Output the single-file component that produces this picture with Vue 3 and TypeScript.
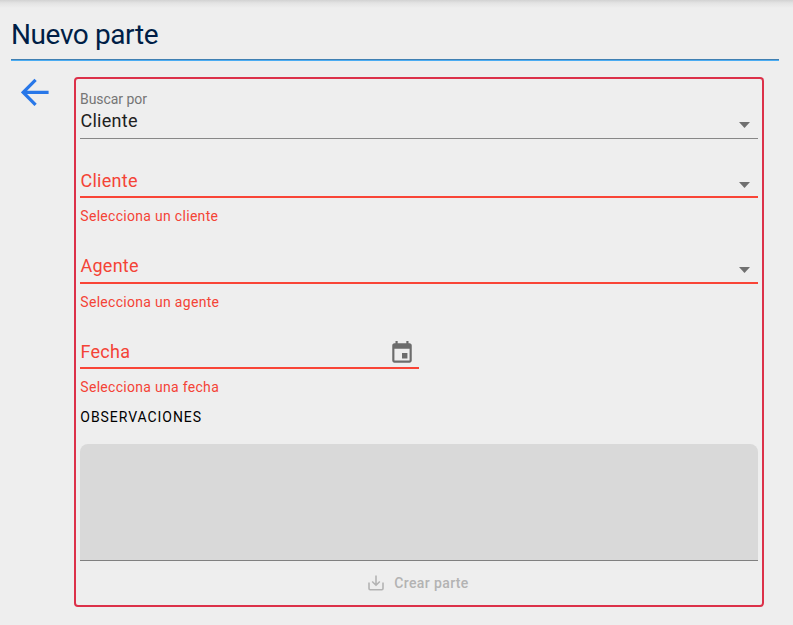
<script setup lang="ts">
import { ref } from 'vue'

interface SelectField {
  id: string
  label: string
  error: string
}

const selects: SelectField[] = [
  { id: 'cliente', label: 'Cliente', error: 'Selecciona un cliente' },
  { id: 'agente', label: 'Agente', error: 'Selecciona un agente' },
]
const searchBy = ref('Cliente')
const notes = ref('')
</script>

<template>
  <main class="page">
    <h1 class="title">Nuevo parte</h1>
    <div class="content">
      <button class="back" type="button" aria-label="Volver">
        <svg width="28" height="28" viewBox="0 0 28 28">
          <path d="M27.6 14.4H3M14.6 1.9L2.2 14.4L14.6 26.9" fill="none" stroke="#2877e8" stroke-width="3.2" />
        </svg>
      </button>
      <form class="card" @submit.prevent>
        <div class="field filled">
          <div>
            <div class="caption">Buscar por</div>
            <div class="value">{{ searchBy }}</div>
          </div>
          <svg class="arrow" width="12" height="6" viewBox="0 0 12 6"><path d="M0 0H11L5.5 6Z" /></svg>
        </div>
        <template v-for="field in selects" :key="field.id">
          <div class="field invalid" :class="field.id">
            <span class="label">{{ field.label }}</span>
            <svg class="arrow" width="12" height="6" viewBox="0 0 12 6"><path d="M0 0H11L5.5 6Z" /></svg>
          </div>
          <div class="error">{{ field.error }}</div>
        </template>
        <div class="field invalid date">
          <span class="label">Fecha</span>
          <svg class="calendar" width="26" height="26" viewBox="0 0 24 24">
            <path d="M17 12h-5v5h5v-5zM16 1v2H8V1H6v2H5c-1.11 0-1.99.9-1.99 2L3 19c0 1.1.89 2 2 2h14c1.1 0 2-.9 2-2V5c0-1.1-.9-2-2-2h-1V1h-2zm3 18H5V8h14v11z" />
          </svg>
        </div>
        <div class="error">Selecciona una fecha</div>
        <label class="notes-label" for="notes">OBSERVACIONES</label>
        <textarea id="notes" v-model="notes" class="notes"></textarea>
        <button class="submit" type="submit" disabled>
          <svg width="16" height="16" viewBox="0 0 16 16">
            <path d="M1 7.5V13.5Q1 14.7 2.2 14.7H13.8Q15 14.7 15 13.5V7.5M8 0.5V9.5M4.2 6.5L8 10.2L11.8 6.5" fill="none" stroke="currentColor" stroke-width="1.6" />
          </svg>
          <span>Crear parte</span>
        </button>
      </form>
    </div>
  </main>
</template>

<style>
body {
  background: #eee;
}
</style>

<style scoped>
.page {
  box-sizing: border-box;
  height: 625px;
  padding: 10px 14px 0 11px;
  overflow: hidden;
  background: linear-gradient(#d2d2d2, #e3e3e3 3px, #eee 8px);
  font-family: Roboto, sans-serif;
}
.title {
  box-sizing: border-box;
  height: 50px;
  margin: 0;
  border-bottom: 1px solid #3f7fb2;
  box-shadow: 0 1px #4bacf2;
  color: #001e46;
  font-size: 28px;
  font-weight: 400;
  line-height: 49px;
  letter-spacing: -0.4px;
}
.content {
  display: flex;
  justify-content: space-between;
  padding: 17px 15px 0 10px;
}
.back {
  width: 28px;
  height: 28px;
  margin-top: 1px;
  padding: 0;
  border: 0;
  background: none;
}
.back svg,
.arrow,
.calendar {
  display: block;
}
.card {
  box-sizing: border-box;
  display: flex;
  flex-direction: column;
  width: 690px;
  height: 530px;
  padding: 0 4px;
  border: 2px solid #dc3049;
  border-radius: 4px;
}
.field {
  box-sizing: border-box;
  display: flex;
  justify-content: space-between;
  flex-shrink: 0;
}
.filled {
  height: 60px;
  padding-top: 10px;
  border-bottom: 1px solid #878787;
}
.caption {
  height: 20px;
  color: #757575;
  font-size: 14px;
  line-height: 20px;
  letter-spacing: -0.05px;
}
.value,
.label {
  padding-left: 0.4px;
  font-size: 18px;
  line-height: 24px;
  letter-spacing: 0.28px;
}
.value {
  color: #202020;
}
.invalid {
  height: 59px;
  padding-top: 30px;
  border-bottom: 2px solid #f94436;
}
.agente,
.date {
  padding-top: 29px;
}
.label {
  color: #f44336;
}
.arrow {
  margin: 13px 7px 0 0;
  fill: #707070;
}
.filled .arrow {
  margin-top: 33px;
}
.date {
  width: 339px;
  height: 58px;
}
.calendar {
  margin: 0 4px 0 0;
  fill: #6c6c6c;
}
.error {
  height: 18px;
  padding: 9px 0 0 0.3px;
  color: #f44336;
  font-size: 14px;
  line-height: 18px;
  letter-spacing: 0.3px;
}
.notes-label {
  height: 42px;
  margin-bottom: 6px;
  padding-left: 0.3px;
  color: #000;
  font-size: 14px;
  line-height: 42px;
  letter-spacing: 0.95px;
}
.notes {
  box-sizing: border-box;
  flex-shrink: 0;
  height: 117px;
  border: 0;
  border-bottom: 1px solid #808080;
  border-radius: 8px 8px 0 0;
  background: #d9d9d9;
  resize: none;
}
.submit {
  display: flex;
  align-items: center;
  justify-content: center;
  gap: 10px;
  height: 44px;
  padding: 0 1px 0 0;
  border: 0;
  background: none;
  color: #b3b3b3;
  font-family: inherit;
  font-size: 14px;
  font-weight: 500;
  letter-spacing: 0.38px;
}
</style>
